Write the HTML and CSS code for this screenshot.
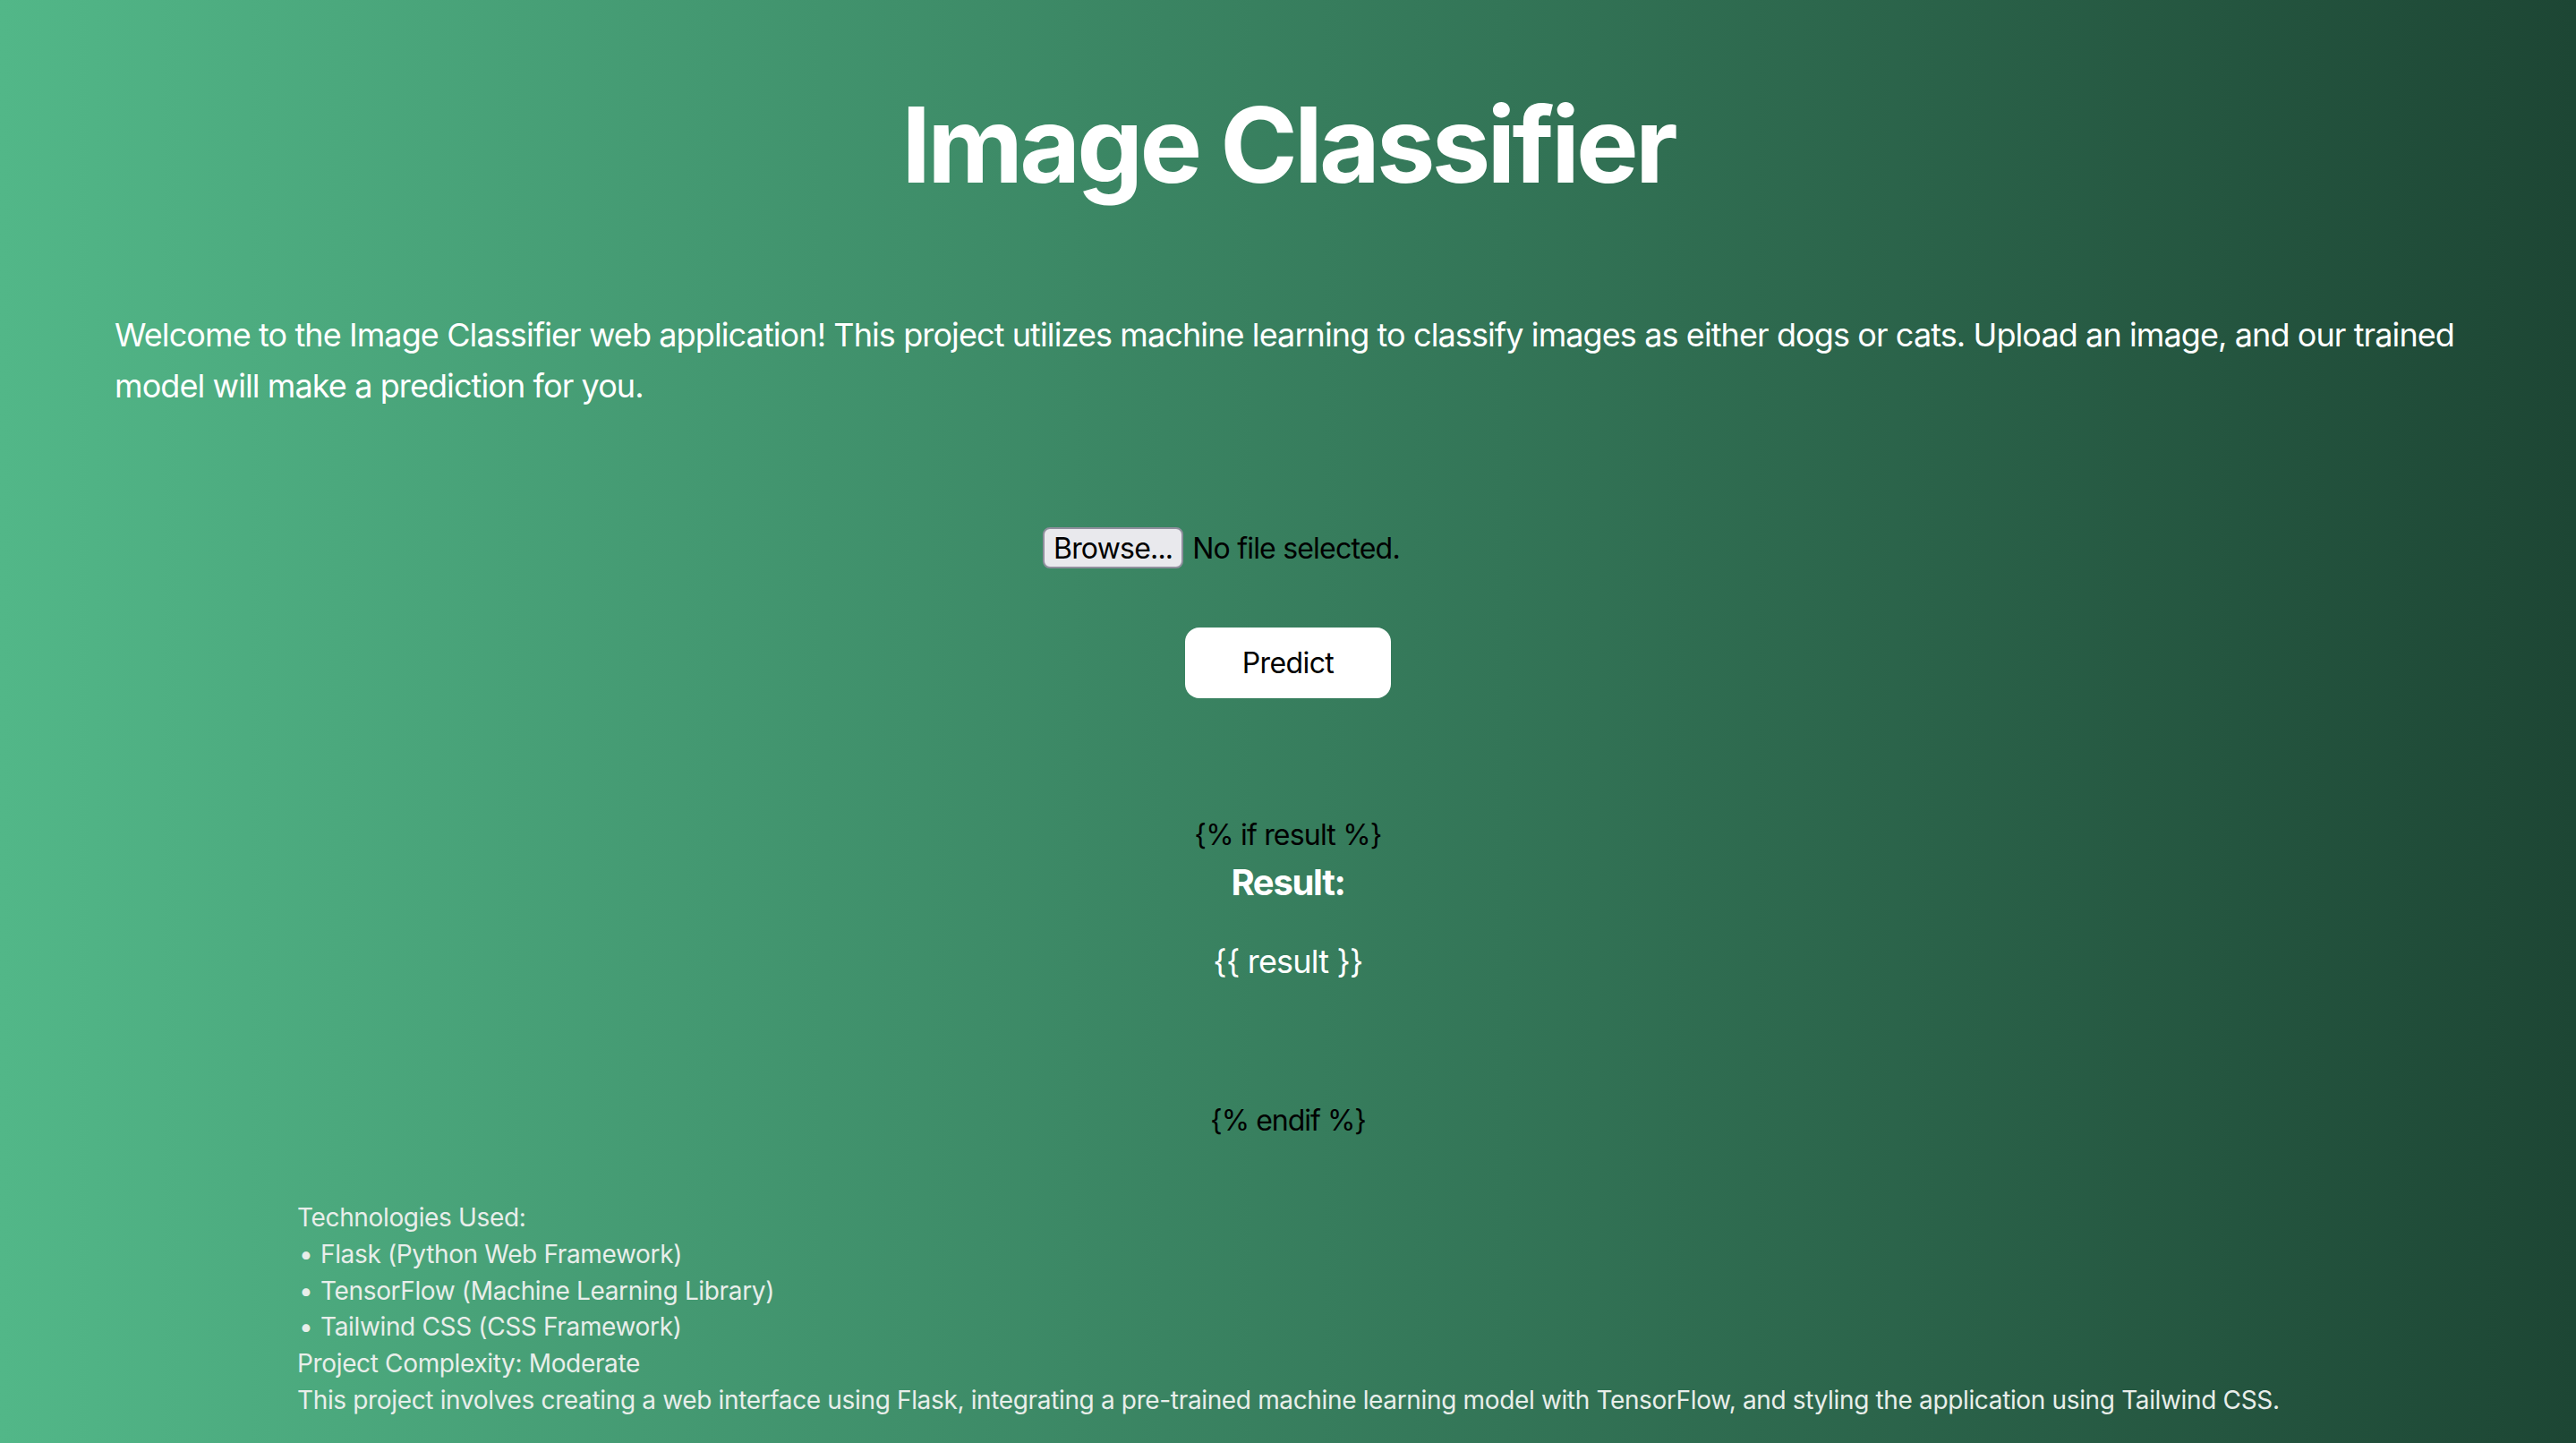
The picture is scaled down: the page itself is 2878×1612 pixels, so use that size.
FILE: index.html
```html
<!DOCTYPE html>
<html lang="en">
<head>
<meta charset="utf-8">
<title>Image Classifier</title>
<link rel="stylesheet" href="styles.css">
</head>
<body>
<main class="page">
  <h1 class="title">Image Classifier</h1>
  <p class="intro">Welcome to the Image Classifier web application! This project utilizes machine learning to classify images as either dogs or cats. Upload an image, and our trained model will make a prediction for you.</p>
  <form class="upload">
    <div class="file-row">
      <span class="browse">Browse...</span>
      <span class="file-name">No file selected.</span>
    </div>
    <button type="button" class="predict">Predict</button>
  </form>
  <section class="result-block">
    <p class="tpl">{% if result %}</p>
    <h2 class="result-title">Result:</h2>
    <p class="result-value">{{ result }}</p>
    <p class="tpl endif">{% endif %}</p>
  </section>
  <section class="tech">
    <p>Technologies Used:</p>
    <p><span class="bullet">•</span>Flask (Python Web Framework)</p>
    <p><span class="bullet">•</span>TensorFlow (Machine Learning Library)</p>
    <p><span class="bullet">•</span>Tailwind CSS (CSS Framework)</p>
    <p>Project Complexity: Moderate</p>
    <p>This project involves creating a web interface using Flask, integrating a pre-trained machine learning model with TensorFlow, and styling the application using Tailwind CSS.</p>
  </section>
</main>
</body>
</html>
```

FILE: styles.css
```css
html, body {
  margin: 0;
  padding: 0;
}
body {
  min-height: 100vh;
  background: linear-gradient(to right, #52b788, #1d4634);
  font-family: Inter, "Noto Sans", "Liberation Sans", sans-serif;
  color: #ffffff;
}
.page {
  padding: 102px 128px 20px;
  display: flex;
  flex-direction: column;
}
.title {
  margin: 0;
  font-size: 117px;
  line-height: 120px;
  font-weight: 700;
  text-align: center;
  letter-spacing: -3.8px;
}
.intro {
  margin: 124px 0 0;
  font-size: 36px;
  line-height: 57px;
  font-weight: 400;
  letter-spacing: -0.9px;
}
.upload {
  margin-top: 129px;
  display: flex;
  flex-direction: column;
  align-items: center;
}
.file-row {
  width: 548px;
  display: flex;
  align-items: center;
  gap: 10px;
  color: #000000;
  font-size: 32px;
  letter-spacing: -0.8px;
  height: 46px;
}
.browse {
  box-sizing: border-box;
  height: 46px;
  padding: 0 10px;
  display: flex;
  align-items: center;
  background: #e9e9ed;
  border: 2px solid #8f8f9d;
  border-radius: 8px;
  color: #000;
}
.predict {
  margin-top: 66px;
  width: 230px;
  height: 79px;
  border: none;
  border-radius: 16px;
  background: #ffffff;
  color: #000000;
  font-family: inherit;
  font-size: 32px;
  letter-spacing: -0.6px;
  padding: 0;
}
.result-block {
  margin-top: 129px;
  display: flex;
  flex-direction: column;
  align-items: center;
  text-align: center;
}
.tpl {
  margin: 0;
  color: #000000;
  font-size: 32px;
  line-height: 48px;
  letter-spacing: -0.8px;
}
.result-title {
  margin: 1px 0 0;
  font-size: 40px;
  line-height: 56px;
  font-weight: 700;
  letter-spacing: -1.3px;
}
.result-value {
  margin: 32px 0 0;
  font-size: 36px;
  line-height: 56px;
  letter-spacing: -0.8px;
}
.endif {
  margin-top: 126px;
  letter-spacing: -1px;
}
.tech {
  margin-top: 64px;
  padding-left: 204px;
  color: #e8eeea;
  font-size: 28px;
  line-height: 40.8px;
  letter-spacing: -0.35px;
}
.tech p {
  margin: 0;
}
.bullet {
  display: inline-block;
  width: 24px;
  padding-left: 2px;
}
```
